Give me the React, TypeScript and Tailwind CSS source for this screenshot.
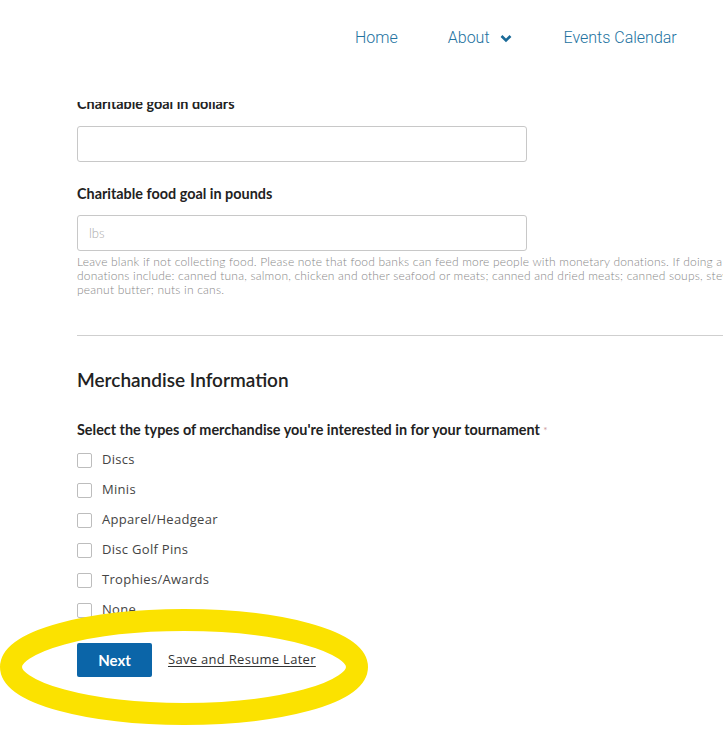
import React from 'react';

const options = ['Discs', 'Minis', 'Apparel/Headgear', 'Disc Golf Pins', 'Trophies/Awards', 'None'];

const App: React.FC = () => {
  return (
    <div className="relative w-[723px] h-[737px] overflow-hidden bg-white font-['Lato',sans-serif]">
      {/* Header */}
      <header className="relative z-10 h-[102px] bg-white">
        <nav className="flex items-center pl-[355px] pt-[27px] h-[22px] box-content font-['Roboto',sans-serif] font-light text-[16px] text-[#2272a0]">
          <a className="leading-[22px]">Home</a>
          <a className="ml-[50px] leading-[22px] flex items-center">
            About
            <svg className="ml-[10px]" width="12" height="9" viewBox="0 0 12 9">
              <path d="M1.5 2 L6 6.5 L10.5 2" stroke="#1a6a98" strokeWidth="2.6" fill="none" />
            </svg>
          </a>
          <a className="ml-[52px] leading-[22px]">Events Calendar</a>
        </nav>
      </header>

      {/* Form */}
      <main className="-mt-[8px] pl-[77px] w-[1000px]">
        <label className="block h-[20px] leading-[20px] text-[14.4px] font-bold text-[#222]">
          Charitable goal in dollars
        </label>
        <input className="mt-[12px] block w-[450px] h-[36px] border border-[#c8c8c8] rounded-[3px] bg-white" />

        <label className="mt-[22px] block h-[20px] leading-[20px] text-[14.4px] font-bold text-[#222]">
          Charitable food goal in pounds
        </label>
        <input
          placeholder="lbs"
          className="mt-[11px] block w-[450px] h-[36px] px-[11px] border border-[#c8c8c8] rounded-[3px] bg-white text-[13px] font-light placeholder:text-[#aaa]"
        />
        <p className="mt-[4px] w-[900px] text-[12px] leading-[14px] font-light tracking-[0.2px] text-[#888]">
          Leave blank if not collecting food. Please note that food banks can feed more people with monetary donations. If doing a food drive, the most needed
          <br />
          donations include: canned tuna, salmon, chicken and other seafood or meats; canned and dried meats; canned soups, stews and chili;
          <br />
          peanut butter; nuts in cans.
        </p>

        <hr className="mt-[38px] border-0 border-t border-[#cfcfcf]" />

        <h2 className="mt-[31px] h-[26px] leading-[26px] text-[19px] font-semibold text-[#222]">Merchandise Information</h2>

        <label className="mt-[27px] block h-[20px] leading-[20px] text-[14.4px] font-bold text-[#222]">
          Select the types of merchandise you're interested in for your tournament <span className="text-[#c99] font-normal text-[10px] align-top">*</span>
        </label>

        <div className="mt-[5px] flex flex-col">
          {options.map((o) => (
            <div key={o} className="flex items-center h-[30px]">
              <span className="w-[15px] h-[15px] border border-[#bdbdbd] rounded-[2px] bg-white" />
              <span className="ml-[10px] font-['Open_Sans',sans-serif] text-[13px] text-[#444] tracking-[0.3px]">{o}</span>
            </div>
          ))}
        </div>

        <div className="mt-[18px] flex items-center">
          <button className="w-[75px] h-[34px] rounded-[2px] bg-[#0b65a8] text-white text-[15px] font-bold">Next</button>
          <a className="ml-[16px] font-['Open_Sans',sans-serif] text-[13px] text-[#333] tracking-[0.3px] underline underline-offset-2">Save and Resume Later</a>
        </div>
      </main>

      {/* Annotation circle */}
      <svg className="absolute left-0 top-0 pointer-events-none" width="723" height="737">
        <ellipse cx="184" cy="667" rx="173" ry="47" fill="none" stroke="#fbe200" strokeWidth="22" />
      </svg>
    </div>
  );
};

export default App;
